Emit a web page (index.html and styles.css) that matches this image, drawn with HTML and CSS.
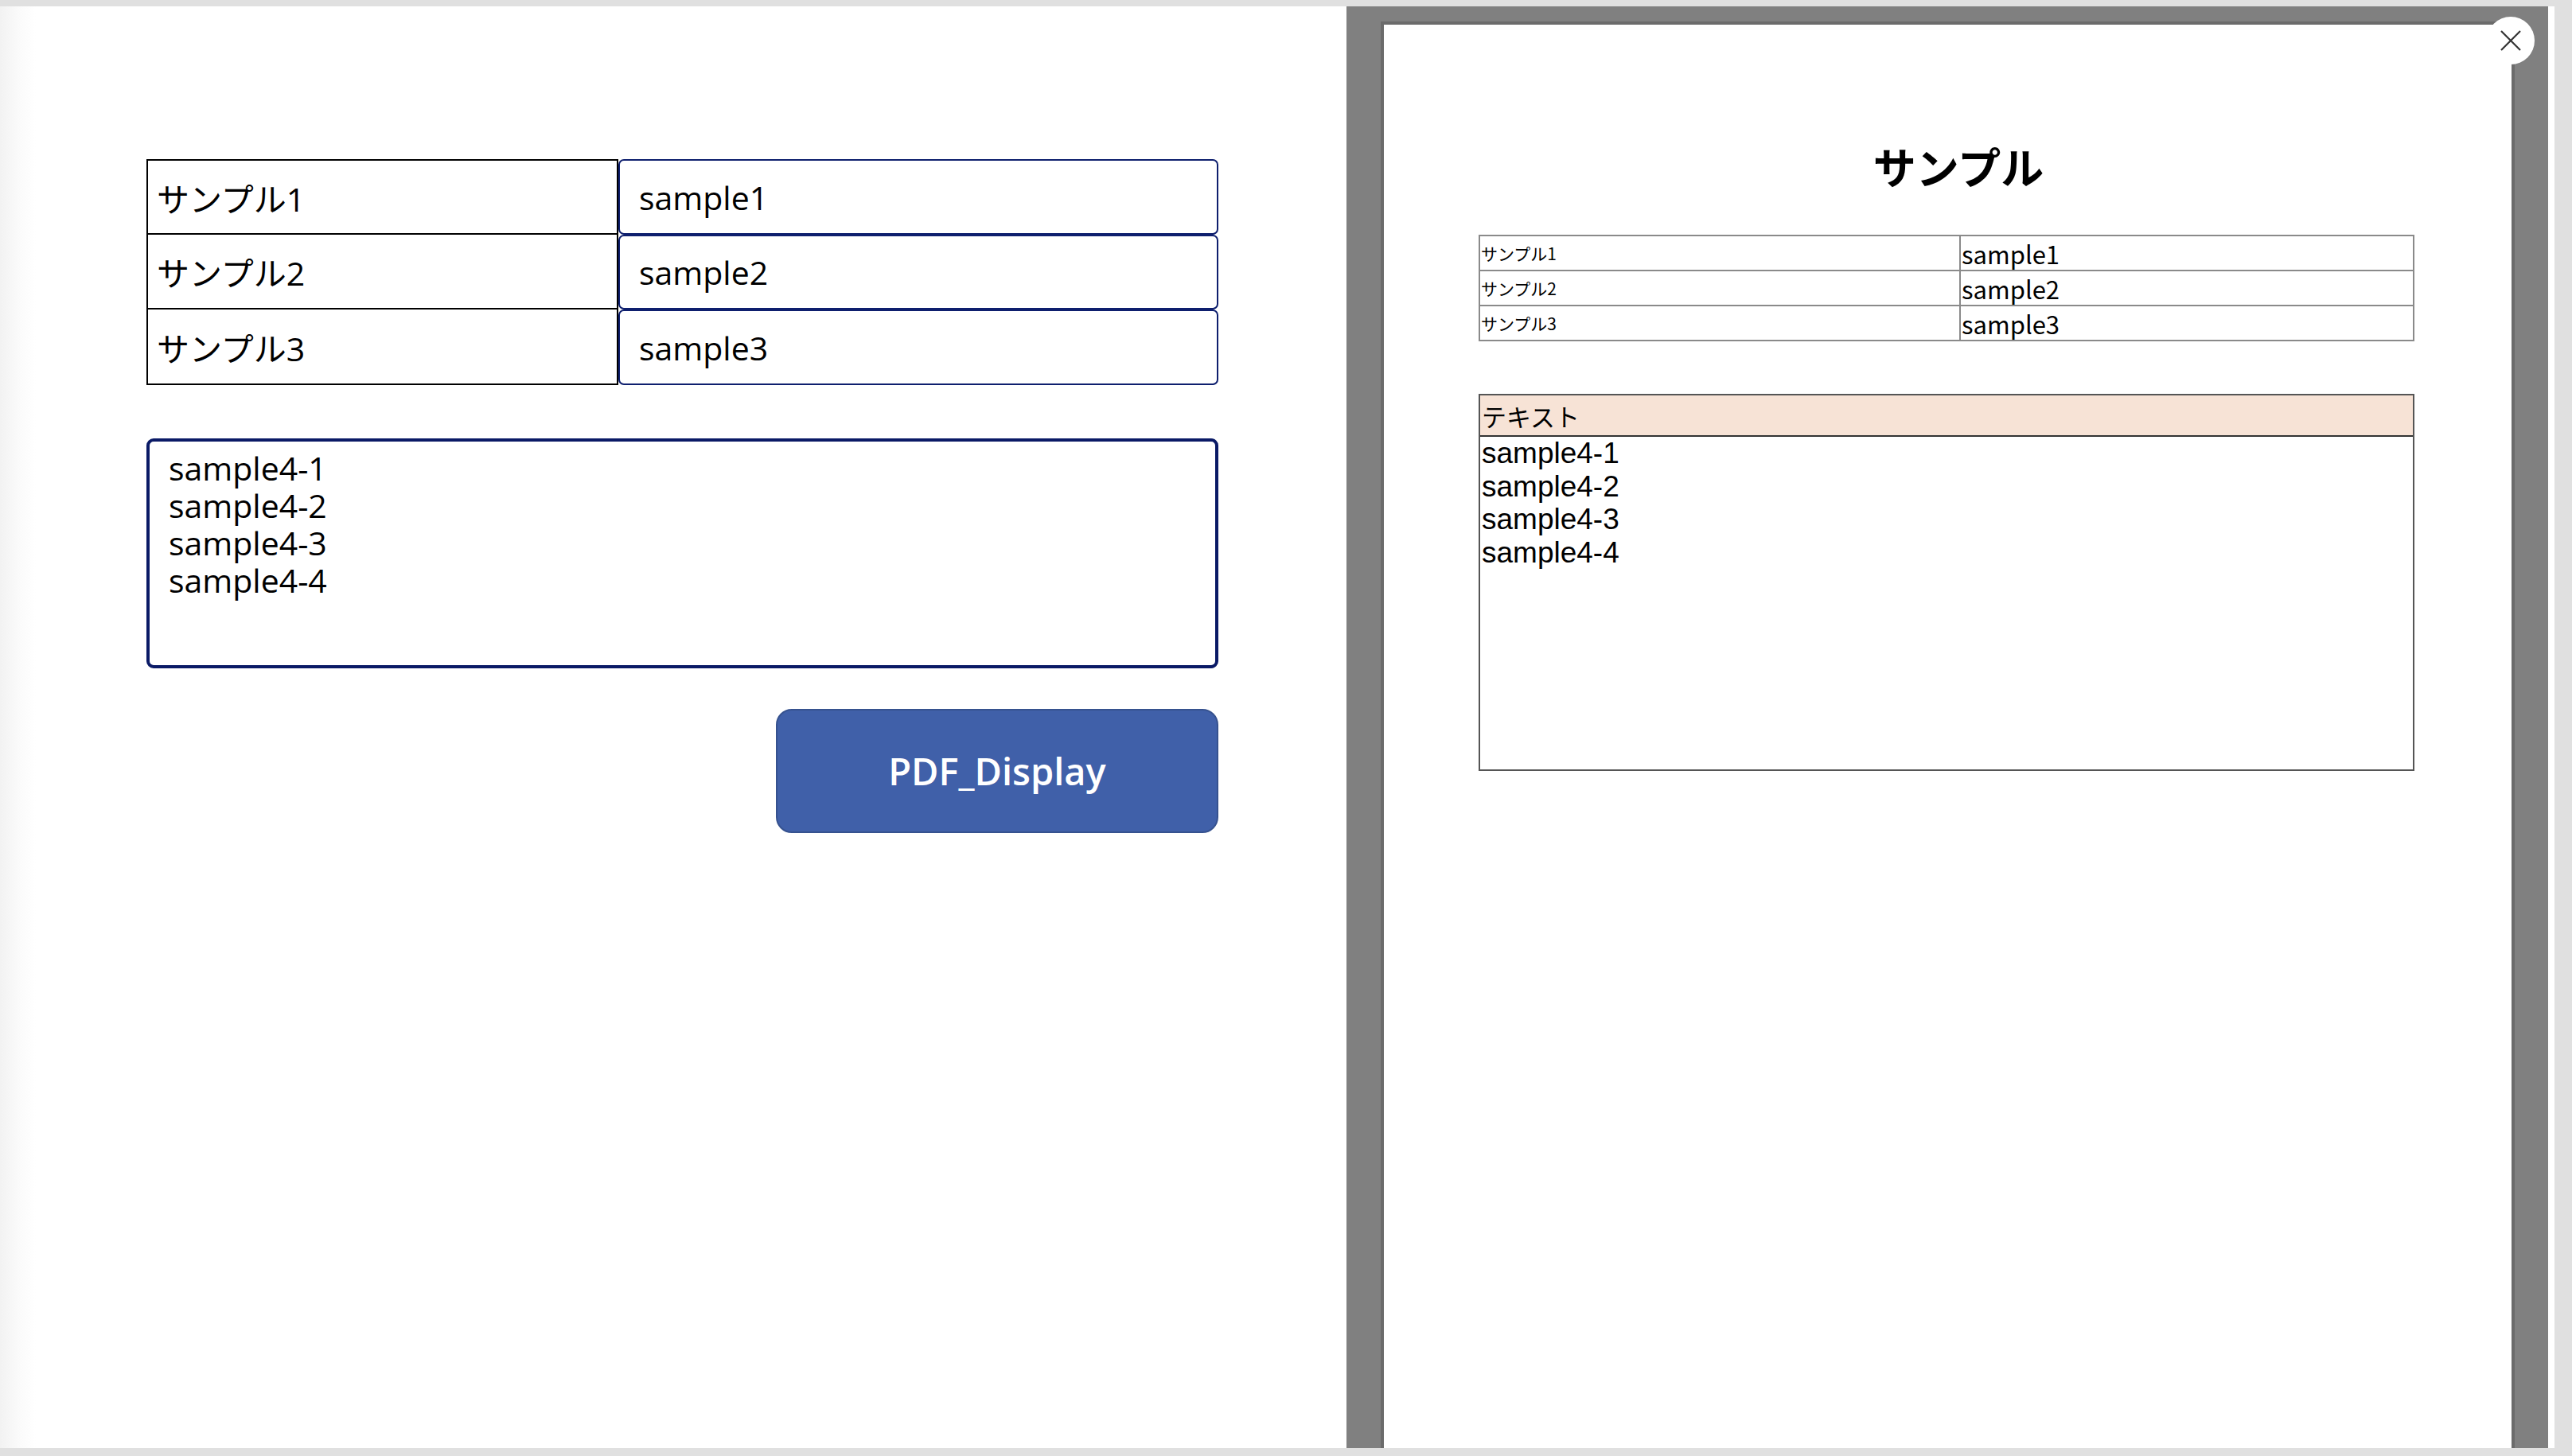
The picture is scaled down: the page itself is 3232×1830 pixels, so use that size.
FILE: index.html
```html
<!DOCTYPE html>
<html lang="ja">
<head>
<meta charset="utf-8">
<title>PDF Display</title>
<link rel="stylesheet" href="styles.css">
</head>
<body>
<div class="app">
  <main class="editor">
    <div class="form">
      <div class="fields">
        <div class="row"><div class="label">サンプル1</div><div class="input">sample1</div></div>
        <div class="row"><div class="label">サンプル2</div><div class="input">sample2</div></div>
        <div class="row"><div class="label">サンプル3</div><div class="input">sample3</div></div>
      </div>
      <div class="textarea">sample4-1<br>sample4-2<br>sample4-3<br>sample4-4</div>
      <div class="actions"><button class="btn" type="button">PDF_Display</button></div>
    </div>
  </main>
  <aside class="viewer">
    <button class="close" type="button" aria-label="close">
      <svg width="26" height="26" viewBox="0 0 26 26"><path d="M1 1 L25 25 M25 1 L1 25" stroke="#333" stroke-width="2.2" fill="none"/></svg>
    </button>
    <div class="page">
      <h1 class="doc-title">サンプル</h1>
      <table class="doc-table">
        <tr><td class="k">サンプル1</td><td class="v">sample1</td></tr>
        <tr><td class="k">サンプル2</td><td class="v">sample2</td></tr>
        <tr><td class="k">サンプル3</td><td class="v">sample3</td></tr>
      </table>
      <div class="doc-box">
        <div class="doc-box-head">テキスト</div>
        <div class="doc-box-body">
          <div class="doc-line">sample4-1</div>
          <div class="doc-line">sample4-2</div>
          <div class="doc-line">sample4-3</div>
          <div class="doc-line">sample4-4</div>
        </div>
      </div>
    </div>
  </aside>
  <div class="edge"></div>
</div>
</body>
</html>
```
FILE: styles.css
```css
html, body {
  margin: 0;
  padding: 0;
  height: 100%;
}
body {
  background: #e0e0e0;
  font-family: "Open Sans", "Noto Sans CJK JP", sans-serif;
  color: #000;
  overflow: hidden;
}
.app {
  display: flex;
  width: 3210px;
  height: 1812px;
  margin-top: 8px;
}
.editor {
  flex: none;
  width: 1692px;
  background: linear-gradient(to right, #f2f2f2 0, #fbfbfb 25px, #ffffff 45px);
}
.form {
  width: 1347px;
  padding: 192px 0 0 184px;
}
.row {
  display: flex;
  height: 95px;
}
.row:nth-child(2) {
  height: 94px;
}
.label {
  flex: none;
  width: 593px;
  box-sizing: border-box;
  border: 2px solid #000;
  padding-left: 11px;
  display: flex;
  align-items: center;
  font-size: 41px;
}
.row + .row .label {
  border-top: none;
}
.input {
  flex: 1;
  box-sizing: border-box;
  border: 2px solid #0e1f6e;
  border-radius: 7px;
  padding-left: 24px;
  display: flex;
  align-items: center;
  font-size: 41px;
}
.textarea {
  margin-top: 67px;
  height: 289px;
  box-sizing: border-box;
  border: 4px solid #0a1a66;
  border-radius: 9px;
  padding: 10px 24px;
  font-size: 41px;
  line-height: 47px;
}
.actions {
  display: flex;
  justify-content: flex-end;
  margin-top: 51px;
}
.btn {
  width: 556px;
  height: 156px;
  box-sizing: border-box;
  background: #4060a9;
  border: 2px solid #36528f;
  border-radius: 20px;
  color: #fff;
  font-family: "Open Sans", sans-serif;
  font-weight: 600;
  font-size: 47px;
  padding: 0;
}
.viewer {
  flex: none;
  position: relative;
  width: 1510px;
  background: #808080;
  overflow: hidden;
}
.edge {
  flex: none;
  width: 8px;
  background: #fff;
}
.page {
  margin: 19px 42px 0 43px;
  border: 4px solid #6b6b6b;
  background: #fff;
  height: 2000px;
  padding: 146px 122px 0 119px;
  font-family: "Noto Sans CJK JP", sans-serif;
}
.close {
  position: absolute;
  left: 1433px;
  top: 13px;
  width: 60px;
  height: 60px;
  border-radius: 50%;
  border: none;
  background: #fff;
  padding: 0;
  display: flex;
  align-items: center;
  justify-content: center;
  z-index: 2;
}
.doc-title {
  margin: 0 0 54px;
  padding-left: 30px;
  text-align: center;
  font-size: 54px;
  font-weight: 700;
  line-height: 64px;
}
.doc-table {
  width: 100%;
  border-collapse: collapse;
  border: 2px solid #444;
}
.doc-table td {
  height: 42px;
  padding: 0 1px;
  border: 2px solid #8a8a8a;
  line-height: 1;
  vertical-align: middle;
}
.doc-table td.k {
  width: 600px;
  font-size: 21px;
}
.doc-table td.v {
  font-size: 31px;
}
.doc-box {
  margin-top: 66px;
  height: 474px;
  box-sizing: border-box;
  border: 2px solid #555;
}
.doc-box-head {
  height: 52px;
  box-sizing: border-box;
  background: #f7e3d6;
  border-bottom: 2px solid #333;
  padding-left: 2px;
  display: flex;
  align-items: center;
  font-size: 31px;
}
.doc-box-body {
  padding: 0 2px;
}
.doc-line {
  height: 41.7px;
  font-family: "Liberation Sans", "Noto Sans CJK JP", sans-serif;
  font-size: 37px;
  line-height: 41.7px;
}
```
